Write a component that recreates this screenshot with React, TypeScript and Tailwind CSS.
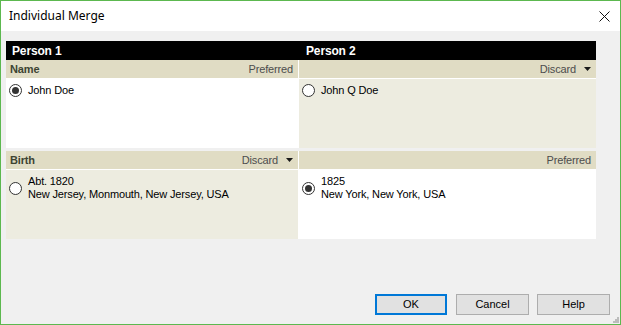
import React from "react";

function Radio({ checked }: { checked?: boolean }) {
  return (
    <span className="w-[13px] h-[13px] rounded-full border border-[#333] bg-white flex items-center justify-center shrink-0">
      {checked && <span className="w-[7px] h-[7px] rounded-full bg-[#333]"></span>}
    </span>
  );
}

function Status({ label, menu }: { label: string; menu?: boolean }) {
  return (
    <span className="flex items-center text-[#4d4d4d]">
      {label}
      {menu && (
        <svg className="ml-[8px]" width="7" height="4" viewBox="0 0 7 4">
          <path d="M0 0H7L3.5 4Z" fill="#1a1a1a" />
        </svg>
      )}
    </span>
  );
}

export default function App() {
  const rows = [
    {
      field: "Name",
      left: { status: "Preferred", menu: false, lines: ["John Doe"], checked: true },
      right: { status: "Discard", menu: true, lines: ["John Q Doe"], checked: false },
    },
    {
      field: "Birth",
      left: { status: "Discard", menu: true, lines: ["Abt. 1820", "New Jersey, Monmouth, New Jersey, USA"], checked: false },
      right: { status: "Preferred", menu: false, lines: ["1825", "New York, New York, USA"], checked: true },
    },
  ];

  return (
    <div className="relative w-[621px] h-[325px] border border-[#5cb84f] bg-[#f0f0f0] flex flex-col overflow-hidden" style={{ fontFamily: '"Liberation Sans", Arial, sans-serif' }}>
      {/* Title bar */}
      <div className="h-[30px] bg-white flex items-center justify-between pl-[8px] pr-[8px] shrink-0">
        <span className="text-[12px] text-black" style={{ fontFamily: '"Noto Sans", "Open Sans", sans-serif' }}>Individual Merge</span>
        <svg width="11" height="11" viewBox="0 0 11 11" className="mr-[2px]">
          <path d="M0.5 0.5L10.5 10.5M10.5 0.5L0.5 10.5" stroke="#111" strokeWidth="1" />
        </svg>
      </div>

      <div className="flex-1 flex flex-col justify-between pt-[10px] pl-[5px] pr-[24px] pb-[9px]">
        <div className="w-[590px] text-[11px] text-black tracking-[-0.15px]">
          {/* Person header */}
          <div className="h-[19px] bg-black text-white font-bold text-[12px] grid grid-cols-[293px_297px] items-center">
            <span className="pl-[6px]">Person 1</span>
            <span className="pl-[7px]">Person 2</span>
          </div>

          {rows.map((row, i) => (
            <div key={row.field} className={i > 0 ? "mt-[3px]" : ""}>
              <div className="grid grid-cols-[292px_297px] gap-x-px bg-white">
                <div className="h-[18px] bg-[#e0dcc4] flex items-center justify-between pl-[4px] pr-[5px]">
                  <span className="font-bold text-[#3d4433]">{row.field}</span>
                  <Status label={row.left.status} menu={row.left.menu} />
                </div>
                <div className="h-[18px] bg-[#e0dcc4] flex items-center justify-end pr-[5px]">
                  <Status label={row.right.status} menu={row.right.menu} />
                </div>
                {[row.left, row.right].map((cell, j) => (
                  <div
                    key={j}
                    className={`h-[69px] mt-px flex items-start pl-[3px] pt-[5px] ${cell.checked ? "bg-white" : "bg-[#edece0]"}`}
                  >
                    <div className="flex items-center gap-[6px]">
                      <Radio checked={cell.checked} />
                      <div className="leading-[13px]">
                        {cell.lines.map((l) => (
                          <div key={l}>{l}</div>
                        ))}
                      </div>
                    </div>
                  </div>
                ))}
              </div>
            </div>
          ))}
        </div>

        {/* Buttons */}
        <div className="flex justify-end text-[11px] text-black mr-[-14px]">
          <button className="w-[72px] h-[21px] bg-[#e1e1e1] border-2 border-[#0078d7]">OK</button>
          <button className="w-[73px] h-[21px] ml-[9px] bg-[#e1e1e1] border border-[#adadad]">Cancel</button>
          <button className="w-[73px] h-[21px] ml-[8px] bg-[#e1e1e1] border border-[#adadad]">Help</button>
        </div>
      </div>

      {/* size grip */}
      <svg className="absolute right-[1px] bottom-[1px]" width="6" height="6" viewBox="0 0 6 6">
        <rect x="4" y="0" width="2" height="2" fill="#bcbcbc" />
        <rect x="2" y="2" width="2" height="2" fill="#bcbcbc" />
        <rect x="4" y="2" width="2" height="2" fill="#bcbcbc" />
        <rect x="0" y="4" width="2" height="2" fill="#bcbcbc" />
        <rect x="2" y="4" width="2" height="2" fill="#bcbcbc" />
        <rect x="4" y="4" width="2" height="2" fill="#bcbcbc" />
      </svg>
    </div>
  );
}
